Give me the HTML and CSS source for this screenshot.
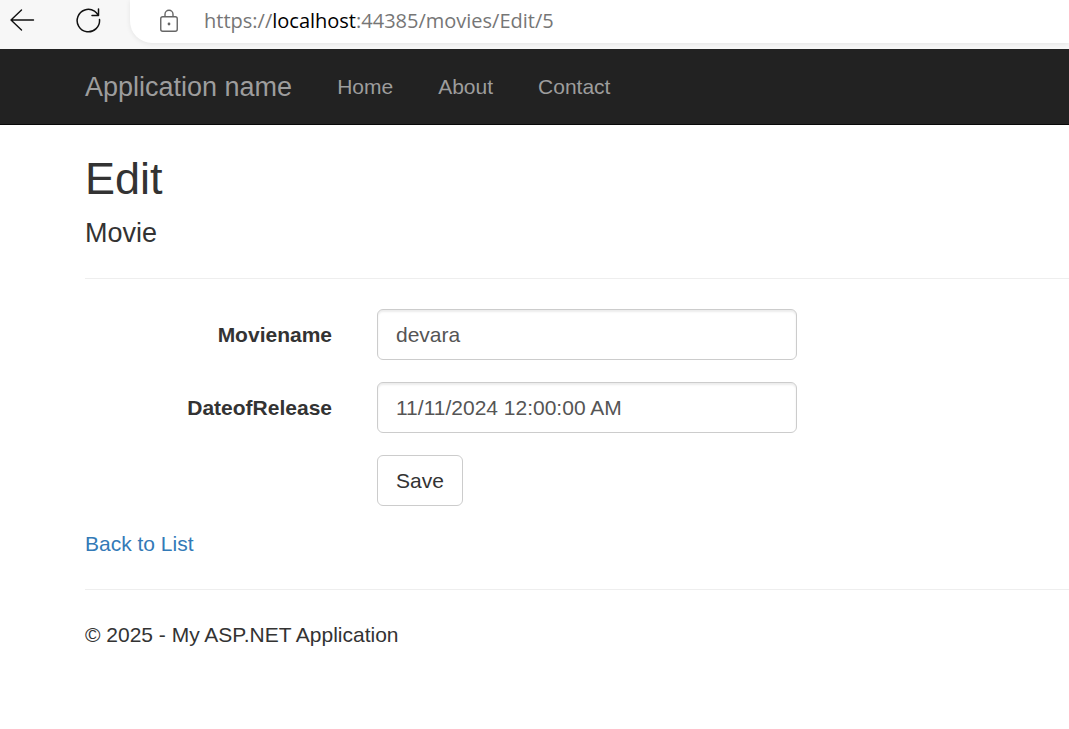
FILE: index.html
```html
<!DOCTYPE html>
<html lang="en">
<head>
  <meta charset="utf-8">
  <title>Edit - My ASP.NET Application</title>
  <link rel="stylesheet" href="styles.css">
</head>
<body>
  <div class="browser-bar">
    <button class="browser-button" type="button" aria-label="Back">
      <svg width="26" height="24" viewBox="0 0 26 24" fill="none" stroke="#111" stroke-width="1.400" stroke-linecap="round" stroke-linejoin="round"><path d="M24.500 12H2M12.500 2L2 12l10.500 10"/></svg>
    </button>
    <button class="browser-button" type="button" aria-label="Refresh">
      <svg width="26" height="26" viewBox="0 0 26 26" fill="none" stroke="#111" stroke-width="1.500" stroke-linecap="round" stroke-linejoin="round"><path d="M24.500 12.500A11.200 11.200 0 1 1 19.500 4.200C21 5.200 22 6.400 23.200 8.200M23.500 2v6.500h-6.500"/></svg>
    </button>
    <div class="address">
      <svg width="20" height="24" viewBox="0 0 20 24" fill="none" stroke="#666" stroke-width="1.400"><rect x="1.750" y="7.750" width="16.500" height="14.500" rx="2"/><path d="M6 7.500V5.300a4 4 0 0 1 8 0v2.200"/><circle cx="10" cy="15" r="1.400" fill="#666" stroke="none"/></svg>
      <span class="url">https://<span class="url-host">localhost</span>:44385/movies/Edit/5</span>
    </div>
  </div>

  <nav class="navbar">
    <a class="brand" href="#">Application name</a>
    <a class="nav-link" href="#">Home</a>
    <a class="nav-link" href="#">About</a>
    <a class="nav-link" href="#">Contact</a>
  </nav>

  <main class="content">
    <h2 class="title">Edit</h2>
    <form class="movie-form">
      <h4 class="subtitle">Movie</h4>
      <hr class="rule">
      <div class="fields">
        <label class="label" for="moviename">Moviename</label>
        <input class="control" id="moviename" type="text" value="devara">
        <label class="label" for="release">DateofRelease</label>
        <input class="control" id="release" type="text" value="11/11/2024 12:00:00 AM">
        <button class="save" type="submit">Save</button>
      </div>
    </form>
    <a class="back-link" href="#">Back to List</a>
    <hr class="rule">
    <footer class="footer">© 2025 - My ASP.NET Application</footer>
  </main>
</body>
</html>
```

FILE: styles.css
```css
* {
  box-sizing: border-box;
}

body {
  margin: 0;
  background: #fff;
  color: #333;
  font-family: "Liberation Sans", Arial, sans-serif;
  font-size: 21px;
  line-height: 30px;
}

.browser-bar {
  display: flex;
  align-items: flex-start;
  height: 49px;
  padding-left: 9px;
  background: #f7f7f7;
  overflow: hidden;
}

.browser-button {
  display: flex;
  align-items: center;
  justify-content: center;
  width: 26px;
  height: 40px;
  margin-right: 40px;
  padding: 0;
  border: 0;
  background: none;
}

.browser-button + .browser-button {
  margin-right: 29px;
}

.address {
  display: flex;
  flex: 1;
  align-items: center;
  gap: 25px;
  height: 43px;
  padding-left: 29px;
  padding-bottom: 2px;
  border-radius: 0 0 0 22px;
  background: #fff;
  box-shadow: 0 1px 5px rgba(0, 0, 0, 0.08);
}

.url {
  color: #767676;
  font-family: "Open Sans", "Noto Sans", sans-serif;
  font-size: 20px;
}

.url-host {
  color: #000;
}

.navbar {
  display: flex;
  align-items: center;
  gap: 45px;
  min-height: 76px;
  padding-left: 85px;
  border-bottom: 1px solid #080808;
  background: #222;
}

.brand,
.nav-link {
  color: #9d9d9d;
  text-decoration: none;
}

.brand {
  font-size: 27px;
}

.content {
  padding: 29px 0 0 85px;
}

.title,
.subtitle {
  margin: 0;
  font-weight: 400;
}

.title {
  font-size: 45px;
  line-height: 50px;
}

.subtitle {
  margin-top: 14px;
  font-size: 27px;
}

.rule {
  height: 1px;
  margin: 30px 0;
  border: 0;
  background: #eee;
}

.fields {
  display: grid;
  grid-template-columns: minmax(0, 247px) minmax(0, 420px);
  column-gap: 45px;
  row-gap: 22px;
  align-items: center;
}

.label {
  font-weight: 700;
  text-align: right;
}

.control,
.save {
  height: 51px;
  padding: 0 18px;
  border: 1px solid #ccc;
  border-radius: 6px;
  background: #fff;
  color: #333;
  font: inherit;
}

.control {
  width: 100%;
  color: #555;
  box-shadow: inset 0 2px 2px rgba(0, 0, 0, 0.075);
}

.save {
  grid-column: 2;
  justify-self: start;
}

.back-link {
  display: block;
  width: fit-content;
  margin-top: 23px;
  color: #337ab7;
  text-decoration: none;
}
```
